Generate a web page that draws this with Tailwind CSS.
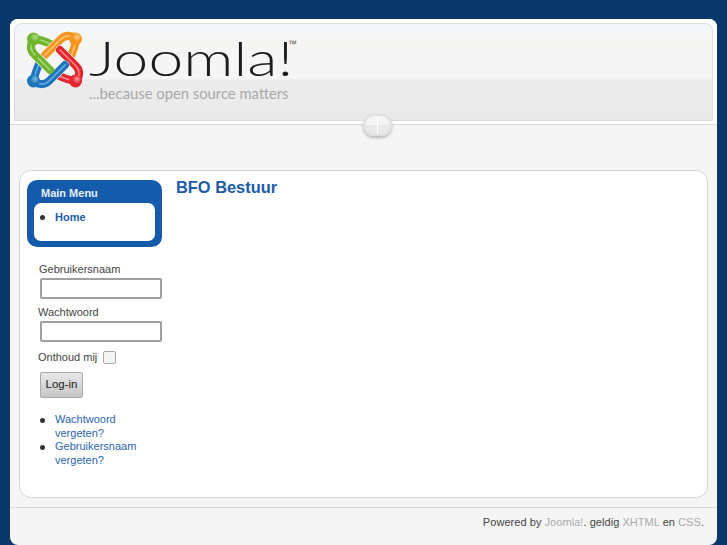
<!DOCTYPE html>
<html lang="nl">
<head>
    <meta charset="UTF-8">
    <title>BFO Bestuur</title>
    <script src="https://cdn.jsdelivr.net/npm/@tailwindcss/browser@4"></script>
</head>
<body class="bg-[#0b386b] h-[545px] overflow-hidden font-['Liberation_Sans',Arial,sans-serif] text-[12px] text-[#333]">
<div class="mx-[10px] pt-[19px] h-[545px]">
    <div class="relative h-[526px] rounded-[8px] bg-[#f5f5f5] overflow-hidden">
        <!-- header -->
        <div class="h-[106px] bg-white px-[4px] pt-[4px] pb-[3px] border-b border-[#dcdcdc]">
            <div class="relative h-[98px] rounded-t-[8px] border border-[#dcdcdc] bg-[linear-gradient(#f3f7fa_0px,#f3f7fa_6px,#f6f5f3_14px,#f5f5f5_40px,#f5f5f5_55px,#ebebeb_56px,#ebebeb_84px,#e8e8e6_97px)]">
                <svg class="absolute left-[9px] top-[5px]" width="62" height="62" viewBox="24 28 62 62" fill="none" stroke-linecap="round" stroke-linejoin="round">
                    <defs>
                        <path id="arm" d="M55 45C47 41 39 38 33 38C30 44 30 49 34 53L50 69"/>
                        <path id="diag" d="M38 57L50 69"/>
                        <radialGradient id="gloss-g" cx="0.62" cy="0.35" r="0.7"><stop offset="0" stop-color="#b5dc8a"/><stop offset="0.5" stop-color="#6fb52c"/></radialGradient>
                        <radialGradient id="gloss-o" cx="0.62" cy="0.35" r="0.7"><stop offset="0" stop-color="#fcd092"/><stop offset="0.5" stop-color="#f7941d"/></radialGradient>
                        <radialGradient id="gloss-b" cx="0.62" cy="0.35" r="0.7"><stop offset="0" stop-color="#7dbbe6"/><stop offset="0.5" stop-color="#1c75bc"/></radialGradient>
                        <radialGradient id="gloss-r" cx="0.62" cy="0.35" r="0.7"><stop offset="0" stop-color="#f49a9d"/><stop offset="0.5" stop-color="#e3262e"/></radialGradient>
                    </defs>
                    <!-- green -->
                    <use href="#arm" stroke="#f5f5f5" stroke-width="9"/>
                    <use href="#arm" stroke="#6fb52c" stroke-width="8"/>
                    <use href="#arm" stroke="#a9d67a" stroke-width="1.5"/>
                    <!-- orange -->
                    <g transform="rotate(90 55 59)">
                        <use href="#arm" stroke="#f5f5f5" stroke-width="9"/>
                        <use href="#arm" stroke="#f7941d" stroke-width="8"/>
                        <use href="#arm" stroke="#fcc77e" stroke-width="1.5"/>
                    </g>
                    <!-- red -->
                    <g transform="rotate(180 55 59)">
                        <use href="#arm" stroke="#f5f5f5" stroke-width="9"/>
                        <use href="#arm" stroke="#e3262e" stroke-width="8"/>
                        <use href="#arm" stroke="#f28a8e" stroke-width="1.5"/>
                    </g>
                    <!-- blue -->
                    <g transform="rotate(270 55 59)">
                        <use href="#arm" stroke="#f5f5f5" stroke-width="9"/>
                        <use href="#arm" stroke="#1c75bc" stroke-width="8"/>
                        <use href="#arm" stroke="#6fb0e0" stroke-width="1.5"/>
                    </g>
                    <!-- green back over blue, so the four arms interlock -->
                    <use href="#diag" stroke="#f5f5f5" stroke-width="9" stroke-linecap="butt"/>
                    <use href="#diag" stroke="#6fb52c" stroke-width="8"/>
                    <use href="#diag" stroke="#a9d67a" stroke-width="1.5"/>
                    <g stroke="none">
                        <circle cx="33.5" cy="38" r="6.5" fill="url(#gloss-g)"/>
                        <circle cx="75.5" cy="38" r="6.5" fill="url(#gloss-o)"/>
                        <circle cx="33.5" cy="80" r="6.5" fill="url(#gloss-b)"/>
                        <circle cx="75.5" cy="80" r="6.5" fill="url(#gloss-r)"/>
                    </g>
                </svg>
                <span class="absolute left-[74px] top-[16px] origin-left scale-x-[1.3] font-['Lato',sans-serif] font-light text-[48px] leading-[36px] text-[#1c1c1c]">Joomla!</span>
                <span class="absolute left-[273px] top-[16px] text-[9px] leading-[8px] text-[#555]">™</span>
                <span class="absolute left-[74px] top-[60px] font-['Lato',sans-serif] text-[14.8px] leading-[18px] text-[#a8a8a8]">...because open source matters</span>
            </div>
        </div>
        <!-- divider knob -->
        <div class="absolute left-[353px] top-[95px] w-[29px] h-[22px] rounded-full border-2 border-[#e0e0e0] bg-[linear-gradient(#f5f5f5_50%,#e8e8e8_50%)] shadow-[0_2px_3px_rgba(0,0,0,0.25)]">
            <div class="mx-auto w-px h-full bg-white"></div>
        </div>

        <!-- content -->
        <div class="mt-[45px] mx-[9px] h-[328px] rounded-[12px] border border-[#d4d4d4] bg-white flex pl-[7px] pt-[9px]">
            <div class="w-[135px] shrink-0">
                <div class="h-[67px] rounded-[10px] bg-[#145cab] px-[7px] pt-[5px]">
                    <h3 class="pl-[7px] h-[18px] text-[11px] leading-[16px] font-bold text-[#e8eef6]">Main Menu</h3>
                    <ul class="h-[38px] rounded-[7px] bg-white pl-[21px] pt-[7px]">
                        <li class="relative text-[11px] leading-[14px] font-bold before:absolute before:left-[-15px] before:top-[5px] before:w-[5px] before:h-[5px] before:rounded-full before:bg-[#333]"><a class="text-[#1b5cab]" href="#">Home</a></li>
                    </ul>
                </div>
                <form class="pt-[15px] text-[11px]">
                    <label class="block pl-[12px] leading-[14px] text-[#444]">Gebruikersnaam</label>
                    <input type="text" class="block ml-[13px] mt-[2px] w-[122px] h-[21px] rounded-[2px] border-2 border-[#a0a0a0] bg-white">
                    <label class="block pl-[11px] mt-[6px] leading-[14px] text-[#444]">Wachtwoord</label>
                    <input type="password" class="block ml-[13px] mt-[2px] w-[122px] h-[21px] rounded-[2px] border-2 border-[#a0a0a0] bg-white">
                    <div class="flex items-center pl-[11px] mt-[8px] h-[14px] text-[#444]">
                        <span>Onthoud mij</span>
                        <span class="ml-[6px] w-[13px] h-[13px] rounded-[2px] border border-[#aaa] bg-[#f4f4f4]"></span>
                    </div>
                    <button type="button" class="block ml-[13px] mt-[8px] w-[43px] h-[26px] rounded-[2px] border border-[#aaa] bg-[linear-gradient(#e8e8e8,#c6c6c6)] text-[11.5px] text-[#222]">Log-in</button>
                    <ul class="pl-[28px] mt-[15px] leading-[13.5px]">
                        <li class="relative before:absolute before:left-[-15px] before:top-[5px] before:w-[5px] before:h-[5px] before:rounded-full before:bg-[#333]"><a class="text-[#2a66b5]" href="#">Wachtwoord vergeten?</a></li>
                        <li class="relative before:absolute before:left-[-15px] before:top-[5px] before:w-[5px] before:h-[5px] before:rounded-full before:bg-[#333]"><a class="text-[#2a66b5]" href="#">Gebruikersnaam vergeten?</a></li>
                    </ul>
                </form>
            </div>
            <div class="pl-[14px]">
                <h2 class="text-[16.4px] leading-[15px] font-bold text-[#1b5cab]">BFO Bestuur</h2>
            </div>
        </div>

        <!-- footer -->
        <div class="mt-[9px] border-t border-[#d8d8d8] pt-[7px] pr-[13px] text-right text-[11px] leading-[14px] tracking-[0.05px] text-[#444]">
            Powered by <a class="text-[#aaa]" href="#">Joomla!</a>. geldig <a class="text-[#aaa]" href="#">XHTML</a> en <a class="text-[#aaa]" href="#">CSS</a>.
        </div>
    </div>
</div>
</body>
</html>
